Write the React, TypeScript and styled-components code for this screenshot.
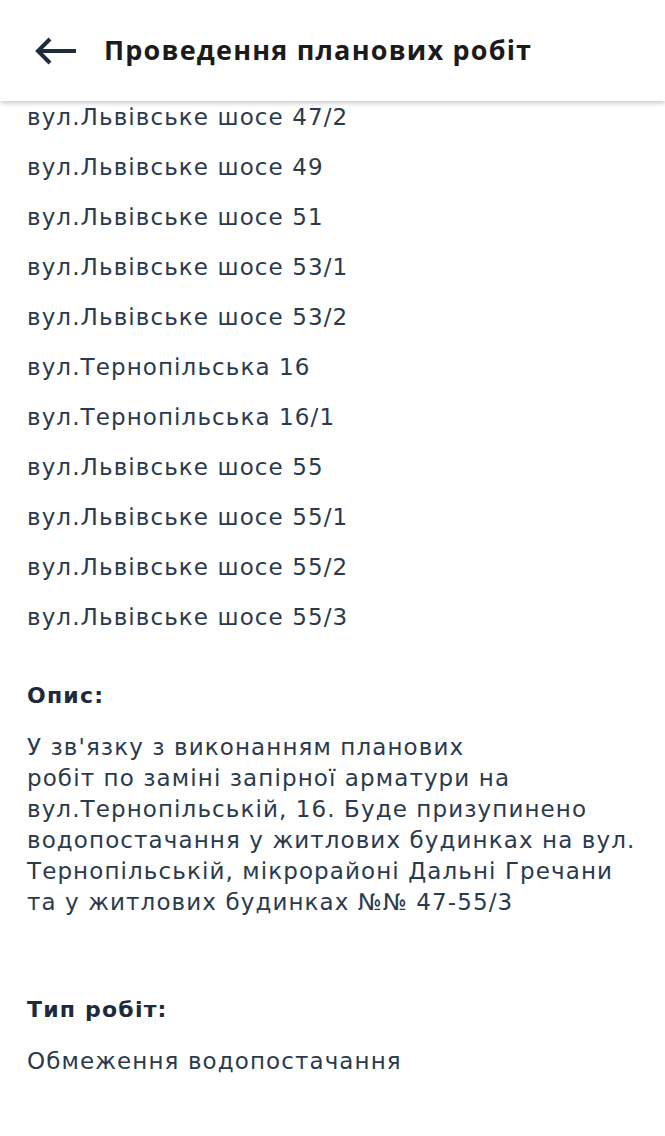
import React from "react";
import styled, { createGlobalStyle } from "styled-components";

const GlobalStyle = createGlobalStyle`
  html, body {
    margin: 0;
    padding: 0;
    background: #ffffff;
  }
  body {
    font-family: "DejaVu Sans", "Noto Sans", sans-serif;
  }
`;

const Screen = styled.div`
  width: 665px;
  min-height: 1136px;
  background: #ffffff;
  overflow: hidden;
`;

const TopBar = styled.header`
  position: sticky;
  top: 0;
  z-index: 2;
  height: 101px;
  display: flex;
  align-items: center;
  gap: 24px;
  padding: 0 0 0 32px;
  background: #ffffff;
  box-shadow: 0 2px 5px rgba(0, 0, 0, 0.22);
`;

const BackButton = styled.button`
  display: flex;
  align-items: center;
  justify-content: center;
  width: 48px;
  height: 48px;
  padding: 0;
  border: none;
  background: transparent;
  color: #1e2d3d;
  cursor: pointer;
`;

const Title = styled.h1`
  margin: 0 0 2px;
  font-family: "Open Sans", "Liberation Sans", sans-serif;
  font-weight: 700;
  font-size: 27px;
  letter-spacing: 1.2px;
  color: #1b1b1b;
`;

const Content = styled.main`
  padding: 4px 24px 40px 27px;
`;

const AddressList = styled.ul`
  list-style: none;
  margin: 0;
  padding: 0;
`;

const Address = styled.li`
  height: 50px;
  line-height: 24px;
  font-size: 23px;
  letter-spacing: 1.1px;
  color: #2a3a4d;
`;

const Section = styled.section<{ $top: number }>`
  margin-top: ${(p) => p.$top}px;
`;

const Label = styled.h2`
  margin: 0 0 24px;
  font-size: 22px;
  letter-spacing: 1.2px;
  font-weight: 700;
  color: #1c2a3c;
`;

const Body = styled.p`
  margin: 0;
  font-size: 23px;
  letter-spacing: 1.1px;
  line-height: 31px;
  color: #2a3a4d;
`;

const addresses = [
  "вул.Львівське шосе 47/2",
  "вул.Львівське шосе 49",
  "вул.Львівське шосе 51",
  "вул.Львівське шосе 53/1",
  "вул.Львівське шосе 53/2",
  "вул.Тернопільська 16",
  "вул.Тернопільська 16/1",
  "вул.Львівське шосе 55",
  "вул.Львівське шосе 55/1",
  "вул.Львівське шосе 55/2",
  "вул.Львівське шосе 55/3",
];

const ArrowLeft = () => (
  <svg width="44" height="30" viewBox="0 0 44 30" fill="none">
    <path
      d="M42 15H5M16 3L4 15l12 12"
      stroke="currentColor"
      strokeWidth="4"
      strokeLinecap="butt"
      strokeLinejoin="miter"
    />
  </svg>
);

const App: React.FC = () => {
  return (
    <>
      <GlobalStyle />
      <Screen>
        <TopBar>
          <BackButton aria-label="Назад">
            <ArrowLeft />
          </BackButton>
          <Title>Проведення планових робіт</Title>
        </TopBar>
        <Content>
          <AddressList>
            {addresses.map((a) => (
              <Address key={a}>{a}</Address>
            ))}
          </AddressList>
          <Section $top={28}>
            <Label>Опис:</Label>
            <Body>
              У зв'язку з виконанням планових
              <br />
              робіт по заміні запірної арматури на вул.Тернопільській, 16. Буде
              призупинено водопостачання у житлових будинках на вул.
              Тернопільській, мікрорайоні Дальні Гречани та у житлових будинках
              №№ 47-55/3
            </Body>
          </Section>
          <Section $top={79}>
            <Label>Тип робіт:</Label>
            <Body>Обмеження водопостачання</Body>
          </Section>
        </Content>
      </Screen>
    </>
  );
};

export default App;
